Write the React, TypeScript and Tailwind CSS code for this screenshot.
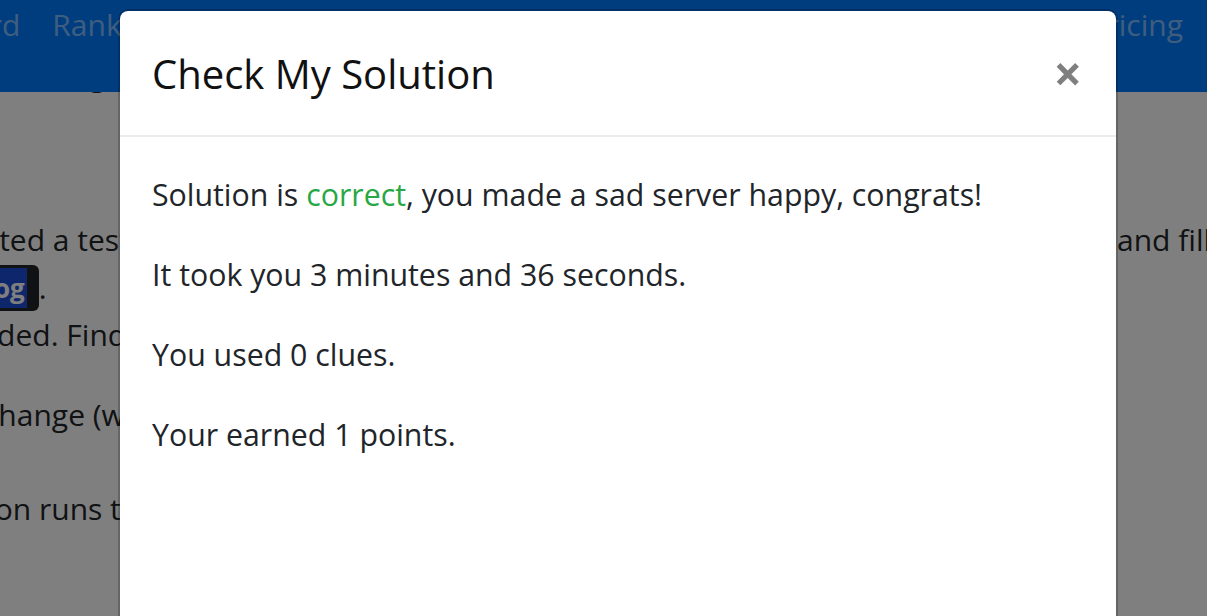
import React from 'react';

const font = { fontFamily: '"Open Sans", "Noto Sans", sans-serif' };

function BackgroundPage() {
  return (
    <div className="absolute inset-0 bg-white" style={font}>
      {/* Navbar */}
      <div className="relative z-10 h-[92px] bg-[#007bff] flex items-start pt-[2px] text-[30px] text-white/50">
        <div className="flex gap-[32px] ml-[-160px]">
          <span>Leaderboard</span>
          <span>Ranking</span>
          <span>Scenarios</span>
          <span>Blog</span>
        </div>
        <div className="ml-auto mr-[24px]">Pricing</div>
      </div>
      {/* Page content behind the modal */}
      <div className="relative text-[30px] text-[#212529] leading-[40px]">
        <div className="absolute left-[14px] top-[-37px] whitespace-nowrap">Debug the server</div>
        <div className="absolute left-[-61px] top-[128px] whitespace-nowrap">created a test file by writing</div>
        <div className="absolute left-[1117px] top-[128px] whitespace-nowrap">and filling</div>
        <div className="absolute left-[-6px] top-[173px] flex items-center whitespace-nowrap">
          <span className="inline-flex h-[46px] items-center rounded-[6px] bg-[#212529] pr-[12px] text-[26px] font-bold text-white">
            <span className="bg-[#1d4fd8] pr-[2px]">og</span>
          </span>
          <span>.</span>
        </div>
        <div className="absolute left-[-55px] top-[223px] whitespace-nowrap">needed. Find the file</div>
        <div className="absolute left-[-16px] top-[303px] whitespace-nowrap">change (without restarting)</div>
        <div className="absolute left-[-84px] top-[397px] whitespace-nowrap">Solution runs this</div>
      </div>
    </div>
  );
}

export default function App() {
  return (
    <div className="relative w-[1207px] h-[616px] overflow-hidden">
      <BackgroundPage />
      {/* Backdrop */}
      <div className="absolute inset-0 z-20 bg-black/50" />

      {/* Modal */}
      <div
        className="absolute z-30 left-[118px] top-[9px] w-[1000px] h-[640px] bg-white rounded-[10px] border-2 border-black/20 bg-clip-padding"
        style={font}
      >
        {/* Header */}
        <div className="flex items-start justify-between px-[32px] pt-[33px] pb-[31px] border-b-2 border-[#e9ecef]">
          <h2 className="text-[40px] leading-[60px] font-medium text-[#111]">Check My Solution</h2>
          <button className="mt-[5px] mr-[2px] text-[50px] leading-[48px] font-bold text-black/50">×</button>
        </div>

        {/* Body */}
        <div className="px-[32px] pt-[34px] text-[30.3px] leading-[48px] text-[#212529]">
          <p className="mb-[32px]">
            Solution is <span className="text-[#28a745]">correct</span>, you made a sad server happy, congrats!
          </p>
          <p className="mb-[32px]">It took you 3 minutes and 36 seconds.</p>
          <p className="mb-[32px]">You used 0 clues.</p>
          <p className="mb-[32px]">Your earned 1 points.</p>
        </div>
      </div>
    </div>
  );
}
